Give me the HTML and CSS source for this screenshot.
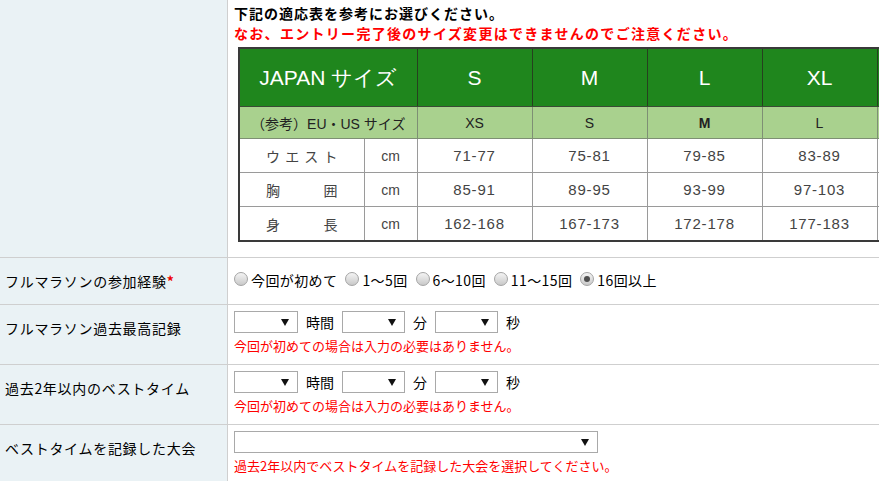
FILE: index.html
```html
<!DOCTYPE html>
<html lang="ja">
<head>
<meta charset="utf-8">
<title>エントリー</title>
<link rel="stylesheet" href="styles.css">
</head>
<body>
<div class="form">
  <div class="row row-size">
    <div class="label"></div>
    <div class="field field-size">
      <p class="lead">下記の適応表を参考にお選びください。</p>
      <p class="warn">なお、エントリー完了後のサイズ変更はできませんのでご注意ください。</p>
      <table class="size">
        <colgroup>
          <col class="c-name"><col class="c-unit">
          <col class="c-size"><col class="c-size"><col class="c-size"><col class="c-size"><col class="c-size">
        </colgroup>
        <tr class="r-jp">
          <th colspan="2">JAPAN サイズ</th><th>S</th><th>M</th><th>L</th><th>XL</th><th></th>
        </tr>
        <tr class="r-eu">
          <td colspan="2">（参考）EU・US サイズ</td><td>XS</td><td>S</td><td class="b">M</td><td>L</td><td></td>
        </tr>
        <tr class="r-data">
          <td><div class="spread"><span>ウ</span><span>エ</span><span>ス</span><span>ト</span></div></td><td>cm</td>
          <td>71-77</td><td>75-81</td><td>79-85</td><td>83-89</td><td></td>
        </tr>
        <tr class="r-data">
          <td><div class="spread"><span>胸</span><span>囲</span></div></td><td>cm</td>
          <td>85-91</td><td>89-95</td><td>93-99</td><td>97-103</td><td></td>
        </tr>
        <tr class="r-data">
          <td><div class="spread"><span>身</span><span>長</span></div></td><td>cm</td>
          <td>162-168</td><td>167-173</td><td>172-178</td><td>177-183</td><td></td>
        </tr>
      </table>
    </div>
  </div>

  <div class="row row-radio">
    <div class="label">フルマラソンの参加経験<span class="req">*</span></div>
    <div class="field field-radio">
      <div class="radios">
        <label class="radio"><span class="dot"></span>今回が初めて</label>
        <label class="radio"><span class="dot"></span>1～5回</label>
        <label class="radio"><span class="dot"></span>6～10回</label>
        <label class="radio"><span class="dot"></span>11～15回</label>
        <label class="radio"><span class="dot on"></span>16回以上</label>
      </div>
    </div>
  </div>

  <div class="row">
    <div class="label">フルマラソン過去最高記録</div>
    <div class="field">
      <div class="time">
        <div class="sel s1"><svg class="arr" width="8" height="7" viewBox="0 0 8 7"><path d="M0 0H8L4 7Z"/></svg></div>
        <span class="unit">時間</span>
        <div class="sel s2"><svg class="arr" width="8" height="7" viewBox="0 0 8 7"><path d="M0 0H8L4 7Z"/></svg></div>
        <span class="unit">分</span>
        <div class="sel s3"><svg class="arr" width="8" height="7" viewBox="0 0 8 7"><path d="M0 0H8L4 7Z"/></svg></div>
        <span class="unit">秒</span>
      </div>
      <p class="note">今回が初めての場合は入力の必要はありません。</p>
    </div>
  </div>

  <div class="row">
    <div class="label">過去2年以内のベストタイム</div>
    <div class="field">
      <div class="time">
        <div class="sel s1"><svg class="arr" width="8" height="7" viewBox="0 0 8 7"><path d="M0 0H8L4 7Z"/></svg></div>
        <span class="unit">時間</span>
        <div class="sel s2"><svg class="arr" width="8" height="7" viewBox="0 0 8 7"><path d="M0 0H8L4 7Z"/></svg></div>
        <span class="unit">分</span>
        <div class="sel s3"><svg class="arr" width="8" height="7" viewBox="0 0 8 7"><path d="M0 0H8L4 7Z"/></svg></div>
        <span class="unit">秒</span>
      </div>
      <p class="note">今回が初めての場合は入力の必要はありません。</p>
    </div>
  </div>

  <div class="row">
    <div class="label">ベストタイムを記録した大会</div>
    <div class="field">
      <div class="time">
        <div class="sel wide"><svg class="arr" width="8" height="7" viewBox="0 0 8 7"><path d="M0 0H8L4 7Z"/></svg></div>
      </div>
      <p class="note">過去2年以内でベストタイムを記録した大会を選択してください。</p>
    </div>
  </div>
</div>
</body>
</html>
```

FILE: styles.css
```css
html, body {
  margin: 0;
  padding: 0;
  overflow: hidden;
  background: #fff;
}
body {
  width: 879px;
  font-family: "Noto Sans CJK JP", sans-serif;
  font-size: 14px;
  color: #000;
}
.form {
  display: flex;
  flex-direction: column;
}
.row {
  display: grid;
  grid-template-columns: 228px 1fr;
  border-bottom: 1px solid #cfcfcf;
}
.label {
  background: #eaf2f5;
  border-right: 1px solid #cfcfcf;
  padding: 13px 0 0 5px;
  line-height: 20px;
  letter-spacing: 0.7px;
  white-space: nowrap;
}
.req {
  color: #e00;
  font-weight: bold;
}
.field {
  padding: 6px 0 8px 6px;
  min-width: 0;
  overflow: hidden;
}
.field-size {
  padding: 3px 0 15px 6px;
}
.field-radio {
  padding: 12px 0 14px 6px;
}
.lead, .warn {
  margin: 0;
  line-height: 20px;
  font-weight: bold;
  letter-spacing: 1px;
  white-space: nowrap;
}
.warn {
  color: #f00;
  letter-spacing: 1.3px;
}

/* size table */
.size {
  margin: 4px 0 0 4px;
  border-collapse: collapse;
  table-layout: fixed;
  width: 753px;
  border: 2px solid #3a3a3a;
  font-family: "Liberation Sans", Arial, sans-serif;
}
.c-name { width: 125px; }
.c-unit { width: 53px; }
.c-size { width: 115px; }
.size th, .size td {
  padding: 0;
  text-align: center;
  white-space: nowrap;
}
.r-jp th {
  height: 57px;
  background: #1f861d;
  color: #fff;
  font-weight: normal;
  font-size: 21px;
  border: 1px solid #26401f;
  border-bottom-color: #3a4a35;
}
.r-eu td {
  height: 31px;
  background: #a9d18e;
  color: #222;
  font-size: 14px;
  border: 1px solid #7e8f74;
  font-family: "Liberation Sans", "Noto Sans CJK JP", sans-serif;
}
.r-eu td.b {
  font-weight: bold;
}
.r-data td {
  height: 33px;
  color: #444;
  font-size: 15px;
  letter-spacing: 0.8px;
  border: 1px solid #9a9a9a;
}
.r-data td:first-child {
  font-family: "Noto Sans CJK JP", sans-serif;
  font-size: 14px;
  letter-spacing: 0;
}
.r-data td:nth-child(2) {
  font-size: 14px;
  letter-spacing: 0;
}
.spread {
  display: flex;
  justify-content: space-between;
  padding: 0 26px;
}

/* radios */
.radios {
  display: flex;
  align-items: center;
  gap: 8px;
  line-height: 20px;
  letter-spacing: 0.4px;
  white-space: nowrap;
}
.radio {
  display: flex;
  align-items: center;
  gap: 3px;
}
.dot {
  box-sizing: border-box;
  width: 14px;
  height: 14px;
  border-radius: 50%;
  border: 1px solid #a4a4a4;
  background: linear-gradient(#f4f4f4, #c9c9c9);
  display: flex;
  align-items: center;
  justify-content: center;
  margin-top: -3px;
}
.dot.on::after {
  content: "";
  width: 6px;
  height: 6px;
  border-radius: 50%;
  background: #4e4e4e;
}

/* selects */
.time {
  display: flex;
  align-items: center;
  height: 22px;
}
.sel {
  box-sizing: border-box;
  height: 22px;
  width: 64px;
  border: 1px solid #a9a9a9;
  background: #fff;
  display: flex;
  align-items: center;
  justify-content: flex-end;
  padding-right: 8px;
}
.s2, .s3 { width: 63px; }
.sel.wide { width: 364px; }
.arr { display: block; fill: #111; }
.unit {
  margin: 0 8px;
  line-height: 20px;
}
.note {
  margin: 3px 0 0;
  color: #f00;
  font-size: 13px;
  line-height: 20px;
  white-space: nowrap;
}
```
